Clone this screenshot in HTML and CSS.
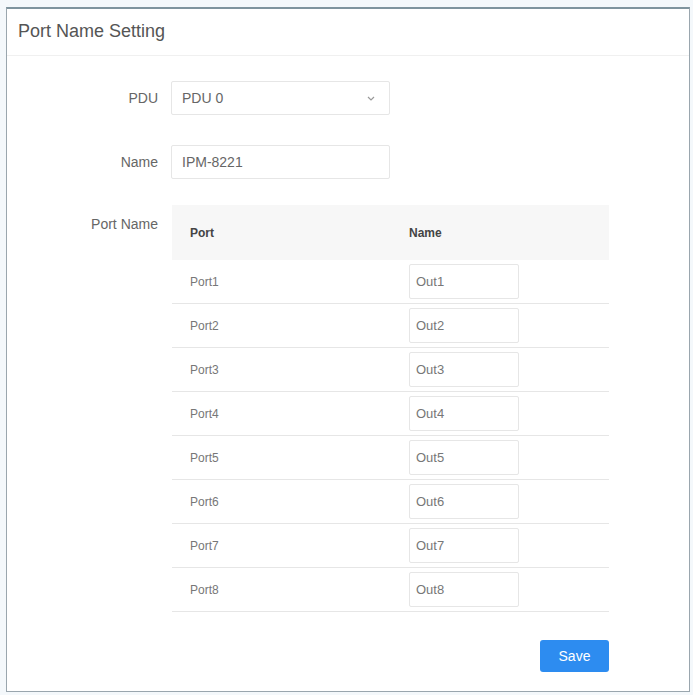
FILE: index.html
```html
<!DOCTYPE html>
<html lang="en">
<head>
    <meta charset="UTF-8">
    <title>Port Name Setting</title>
    <link rel="stylesheet" href="styles.css">
</head>
<body>
<div class="panel">
    <div class="panel-head">Port Name Setting</div>
    <div class="panel-body">
        <div class="row">
            <label class="lbl">PDU</label>
            <div class="select">
                <span>PDU 0</span>
                <svg width="8" height="5" viewBox="0 0 8 5"><path d="M1 1l3 3 3-3" fill="none" stroke="#999" stroke-width="1.2"/></svg>
            </div>
        </div>
        <div class="row name">
            <label class="lbl">Name</label>
            <input class="inp" type="text" value="IPM-8221">
        </div>
        <div class="row top">
            <label class="lbl">Port Name</label>
            <table class="ports">
                <thead>
                    <tr><th class="c1">Port</th><th>Name</th></tr>
                </thead>
                <tbody>
                    <tr><td class="c1">Port1</td><td><input class="cell" type="text" value="Out1"></td></tr>
                    <tr><td class="c1">Port2</td><td><input class="cell" type="text" value="Out2"></td></tr>
                    <tr><td class="c1">Port3</td><td><input class="cell" type="text" value="Out3"></td></tr>
                    <tr><td class="c1">Port4</td><td><input class="cell" type="text" value="Out4"></td></tr>
                    <tr><td class="c1">Port5</td><td><input class="cell" type="text" value="Out5"></td></tr>
                    <tr><td class="c1">Port6</td><td><input class="cell" type="text" value="Out6"></td></tr>
                    <tr><td class="c1">Port7</td><td><input class="cell" type="text" value="Out7"></td></tr>
                    <tr><td class="c1">Port8</td><td><input class="cell" type="text" value="Out8"></td></tr>
                </tbody>
            </table>
        </div>
        <div class="actions">
            <button class="btn">Save</button>
        </div>
    </div>
</div>
</body>
</html>
```
FILE: styles.css
```css
body{
    margin: 0;
    background-color: #f4f8fb;
    font-family: "Liberation Sans", Arial, sans-serif;
    color: #666;
}
.panel{
    margin: 7px 3px 3px 6px;
    height: 685px;
    box-sizing: border-box;
    background-color: #fff;
    border: 1px solid #9aa6ae;
    border-top: 2px solid #7f949e;
}
.panel-head{
    height: 46px;
    line-height: 44px;
    padding-left: 11px;
    font-size: 18px;
    color: #555;
    border-bottom: 1px solid #f0f0f0;
}
.panel-body{
    padding-top: 25px;
}
.row{
    display: flex;
    align-items: center;
    margin-bottom: 30px;
}
.row.name{
    margin-bottom: 26px;
}
.row.top{
    align-items: flex-start;
    margin-bottom: 0;
}
.lbl{
    width: 164px;
    text-align: right;
    padding-right: 13px;
    font-size: 14px;
    color: #666;
    box-sizing: border-box;
}
.row.top .lbl{
    padding-top: 11px;
}
.select,.inp{
    width: 219px;
    height: 34px;
    box-sizing: border-box;
    border: 1px solid #e6e6e6;
    border-radius: 2px;
    font-size: 14px;
    color: #666;
    font-family: inherit;
}
.select{
    display: flex;
    align-items: center;
    justify-content: space-between;
    padding: 0 14px 0 10px;
}
.inp{
    padding: 0 10px;
    outline: none;
}
.ports{
    width: 437px;
    border-collapse: collapse;
    font-size: 12px;
    margin-left: 1px;
}
.ports th{
    height: 55px;
    background-color: #f7f7f7;
    text-align: left;
    font-weight: bold;
    color: #444;
    padding: 0;
}
.ports td{
    height: 43px;
    border-bottom: 1px solid #e6e6e6;
    padding: 0;
    color: #777;
}
.ports .c1{
    width: 219px;
    padding-left: 18px;
}
.cell{
    width: 110px;
    height: 35px;
    box-sizing: border-box;
    border: 1px solid #e6e6e6;
    border-radius: 2px;
    padding: 0 6px;
    font-family: inherit;
    font-size: 13px;
    color: #777;
    outline: none;
    display: block;
}
.actions{
    display: flex;
    justify-content: flex-end;
    width: 602px;
    margin-top: 28px;
}
.btn{
    width: 69px;
    height: 32px;
    border: none;
    border-radius: 3px;
    background-color: #2d8cf0;
    color: #fff;
    font-family: inherit;
    font-size: 14px;
}
```
